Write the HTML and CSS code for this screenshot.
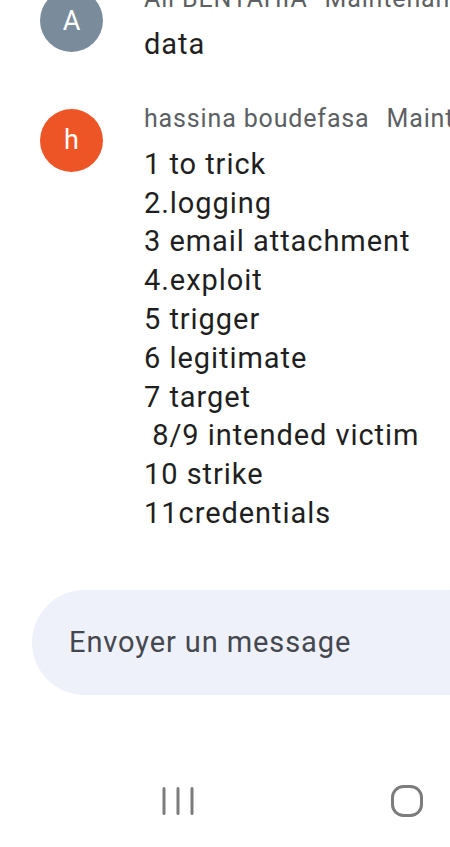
FILE: index.html
```html
<!DOCTYPE html>
<html lang="fr">
<head>
<meta charset="utf-8">
<title>Messages</title>
<link rel="stylesheet" href="styles.css">
</head>
<body>
<main class="screen">
  <section class="thread">
    <article class="msg">
      <div class="avatar avatar-a">A</div>
      <div class="content">
        <div class="name">Ali BENTAHIA<span class="time">Maintenant</span></div>
        <div class="body">data</div>
      </div>
    </article>
    <article class="msg">
      <div class="avatar avatar-h">h</div>
      <div class="content">
        <div class="name">hassina boudefasa<span class="time">Maintenant</span></div>
        <div class="body">1 to trick<br>2.logging<br>3 email attachment<br>4.exploit<br>5 trigger<br>6 legitimate<br>7 target<br>&nbsp;8/9 intended victim<br>10 strike<br>11credentials</div>
      </div>
    </article>
  </section>
  <div class="composer">Envoyer un message</div>
  <nav class="navbar">
    <svg class="nav-recent" width="32" height="30" viewBox="0 0 32 30" aria-hidden="true">
      <path d="M2 2.5V27.5M16 2.5V27.5M30 2.5V27.5" fill="none" stroke="#7c7c7c" stroke-width="3" stroke-linecap="round"/>
    </svg>
    <svg class="nav-home" width="36" height="36" viewBox="0 0 36 36" aria-hidden="true">
      <rect x="3.5" y="3.5" width="29" height="29" rx="11" fill="none" stroke="#7c7c7c" stroke-width="3"/>
    </svg>
  </nav>
</main>
</body>
</html>
```
FILE: styles.css
```css
html, body {
  margin: 0;
  padding: 0;
  background: #ffffff;
}
body {
  width: 450px;
  height: 847px;
  overflow: hidden;
  font-family: Roboto, "Noto Sans", "Liberation Sans", sans-serif;
}
.screen {
  width: 450px;
  height: 847px;
  overflow: hidden;
}
.thread {
  margin-top: -16px;
}
.msg {
  display: flex;
  padding-left: 40px;
}
.msg + .msg {
  margin-top: 40px;
}
.avatar {
  flex: none;
  width: 63px;
  height: 63px;
  border-radius: 50%;
  margin-top: 5px;
  display: flex;
  align-items: center;
  justify-content: center;
  color: #ffffff;
  font-size: 27px;
}
.avatar-a {
  background: #7a8c9b;
}
.avatar-h {
  background: #ee5526;
}
.content {
  margin-left: 41px;
  white-space: nowrap;
  min-width: 0;
}
.name {
  font-size: 25px;
  line-height: 30px;
  letter-spacing: 0.85px;
  color: #5c5f63;
  margin-bottom: 11px;
}
.time {
  margin-left: 17px;
}
.body {
  font-size: 29px;
  line-height: 38.8px;
  letter-spacing: 0.95px;
  color: #1f1f1f;
}
.composer {
  margin-top: 57px;
  margin-left: 32px;
  margin-right: -80px;
  height: 105px;
  border-radius: 53px;
  background: #eef1f9;
  display: flex;
  align-items: center;
  padding-left: 37px;
  font-size: 29px;
  letter-spacing: 0.9px;
  color: #44474e;
}
.navbar {
  margin-top: 88px;
  height: 36px;
  display: flex;
  align-items: center;
  padding-left: 162px;
}
.nav-home {
  margin-left: 195px;
}
```
